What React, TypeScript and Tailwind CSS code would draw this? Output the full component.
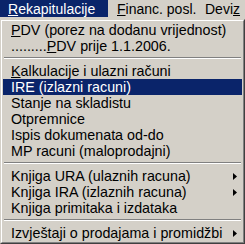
import type { ReactNode } from "react";

type Item =
  | { kind: "sep" }
  | { kind: "item"; label: ReactNode; active?: boolean; sub?: boolean };

const items: Item[] = [
  { kind: "item", label: <><u>P</u>DV (porez na dodanu vrijednost)</> },
  { kind: "item", label: <>.........<u>P</u>DV prije 1.1.2006.</> },
  { kind: "sep" },
  { kind: "item", label: <><u>K</u>alkulacije i ulazni računi</> },
  { kind: "item", label: "IRE (izlazni racuni)", active: true },
  { kind: "item", label: "Stanje na skladistu" },
  { kind: "item", label: "Otpremnice" },
  { kind: "item", label: "Ispis dokumenata od-do" },
  { kind: "item", label: "MP racuni (maloprodajni)" },
  { kind: "sep" },
  { kind: "item", label: "Knjiga URA (ulaznih racuna)", sub: true },
  { kind: "item", label: "Knjiga IRA (izlaznih racuna)", sub: true },
  { kind: "item", label: "Knjiga primitaka i izdataka" },
  { kind: "sep" },
  { kind: "item", label: "Izvještaji o prodajama i promidžbi", sub: true },
];

function Arrow({ active }: { active?: boolean }) {
  return (
    <svg width="4" height="7" viewBox="0 0 4 7" className="mr-[5px] shrink-0">
      <path d="M0 0 L4 3.5 L0 7 Z" fill={active ? "#ffffff" : "#000000"} />
    </svg>
  );
}

export default function App() {
  return (
    <div className="h-[244px] w-[245px] overflow-hidden bg-[#d4d0c8] font-['Liberation_Sans',Arial,sans-serif] text-black">
      {/* menu bar */}
      <div className="flex h-[19px] text-[14px] leading-[16px]">
        <div className="h-[17px] w-[108px] bg-[#0a246a] pl-[8px] pt-[1px] text-white">
          <u>R</u>ekapitulacije
        </div>
        <div className="h-[17px] w-[97px] pl-[9px] pt-[1px]">
          <u>F</u>inanc. posl.
        </div>
        <div className="h-[17px] pt-[1px]">
          Devi<u>z</u>
        </div>
      </div>

      {/* dropdown */}
      <div className="w-[245px] border border-[#d4d0c8] border-b-[#404040] border-r-[#404040]">
        <div className="border border-white border-b-[#808080] border-r-[#808080] p-[1px] text-[14.3px] leading-[16px]">
          {items.map((it, i) =>
            it.kind === "sep" ? (
              <div key={i} className="h-[9px] px-[1px] pt-[3px]">
                <div className="h-[1px] bg-[#808080]" />
                <div className="h-[1px] bg-white" />
              </div>
            ) : (
              <div
                key={i}
                className={`flex h-[16px] items-center justify-between whitespace-nowrap pl-[8px] ${
                  it.active ? "bg-[#0a246a] text-white" : ""
                }`}
              >
                <span>{it.label}</span>
                {it.sub && <Arrow active={it.active} />}
              </div>
            )
          )}
        </div>
      </div>
    </div>
  );
}
